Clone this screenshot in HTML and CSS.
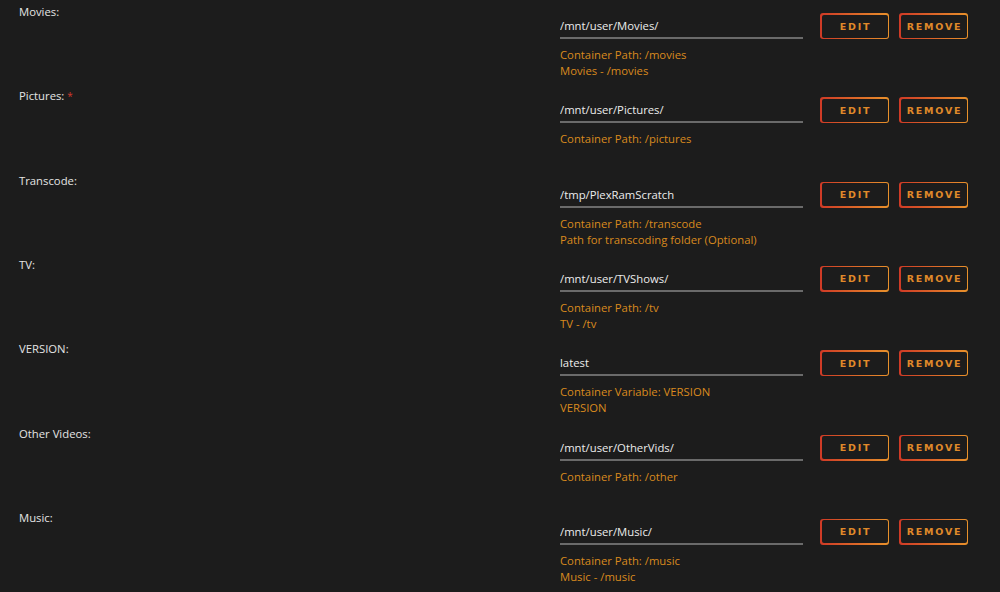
FILE: index.html
```html
<!DOCTYPE html>
<html>
<head>
  <title>Container Settings</title>
  <link rel="stylesheet" href="styles.css">
</head>
<body>
  <div class="settings">
    <div class="row">
      <div class="label">Movies:</div>
      <div class="field">
        <div class="field-line">
          <input class="path-input" type="text" value="/mnt/user/Movies/">
          <button class="btn"><span>EDIT</span></button>
          <button class="btn"><span>REMOVE</span></button>
        </div>
        <div class="desc">Container Path: /movies</div>
        <div class="desc">Movies - /movies</div>
      </div>
    </div>
    <div class="row">
      <div class="label">Pictures: <span class="req">*</span></div>
      <div class="field">
        <div class="field-line">
          <input class="path-input" type="text" value="/mnt/user/Pictures/">
          <button class="btn"><span>EDIT</span></button>
          <button class="btn"><span>REMOVE</span></button>
        </div>
        <div class="desc">Container Path: /pictures</div>
      </div>
    </div>
    <div class="row">
      <div class="label">Transcode:</div>
      <div class="field">
        <div class="field-line">
          <input class="path-input" type="text" value="/tmp/PlexRamScratch">
          <button class="btn"><span>EDIT</span></button>
          <button class="btn"><span>REMOVE</span></button>
        </div>
        <div class="desc">Container Path: /transcode</div>
        <div class="desc">Path for transcoding folder (Optional)</div>
      </div>
    </div>
    <div class="row">
      <div class="label">TV:</div>
      <div class="field">
        <div class="field-line">
          <input class="path-input" type="text" value="/mnt/user/TVShows/">
          <button class="btn"><span>EDIT</span></button>
          <button class="btn"><span>REMOVE</span></button>
        </div>
        <div class="desc">Container Path: /tv</div>
        <div class="desc">TV - /tv</div>
      </div>
    </div>
    <div class="row">
      <div class="label">VERSION:</div>
      <div class="field">
        <div class="field-line">
          <input class="path-input" type="text" value="latest">
          <button class="btn"><span>EDIT</span></button>
          <button class="btn"><span>REMOVE</span></button>
        </div>
        <div class="desc">Container Variable: VERSION</div>
        <div class="desc">VERSION</div>
      </div>
    </div>
    <div class="row">
      <div class="label">Other Videos:</div>
      <div class="field">
        <div class="field-line">
          <input class="path-input" type="text" value="/mnt/user/OtherVids/">
          <button class="btn"><span>EDIT</span></button>
          <button class="btn"><span>REMOVE</span></button>
        </div>
        <div class="desc">Container Path: /other</div>
      </div>
    </div>
    <div class="row">
      <div class="label">Music:</div>
      <div class="field">
        <div class="field-line">
          <input class="path-input" type="text" value="/mnt/user/Music/">
          <button class="btn"><span>EDIT</span></button>
          <button class="btn"><span>REMOVE</span></button>
        </div>
        <div class="desc">Container Path: /music</div>
        <div class="desc">Music - /music</div>
      </div>
    </div>
  </div>
</body>
</html>
```

FILE: styles.css
```css
body {
  margin: 0;
  background-color: #1c1c1c;
  font-family: "Open Sans", "Noto Sans", sans-serif;
  font-size: 11.3px;
  overflow: hidden;
}

.settings {
  padding-left: 19px;
}

.row {
  display: flex;
  height: 84.33px;
}

.label {
  width: 541px;
  padding-top: 4px;
  line-height: 16px;
  color: #e4e4e4;
}

.req {
  color: #d33a2c;
  font-size: 10px;
  vertical-align: top;
}

.field {
  padding-top: 13px;
}

.field-line {
  display: flex;
  align-items: center;
  gap: 10px;
  margin-bottom: 8px;
}

.path-input {
  width: 243px;
  height: 26px;
  margin-right: 7px;
  padding: 1px 0 0 0;
  border: none;
  border-bottom: 2px solid #6a6a6a;
  background: transparent;
  color: #ececec;
  font-family: inherit;
  font-size: 11.3px;
  outline: none;
  box-sizing: border-box;
}

.btn {
  width: 69px;
  height: 26px;
  padding: 1.5px;
  border: none;
  border-radius: 3px;
  background: linear-gradient(90deg, #cf3a26, #e8912b);
  cursor: pointer;
}

.btn span {
  display: flex;
  align-items: center;
  justify-content: center;
  height: 100%;
  border-radius: 2px;
  background-color: #1c1c1c;
  color: #e08a2a;
  font-family: "DejaVu Sans", sans-serif;
  font-size: 9.5px;
  font-weight: 700;
  letter-spacing: 1.8px;
  padding-left: 2px;
}

.desc {
  line-height: 16px;
  color: #d98a1e;
}
```
